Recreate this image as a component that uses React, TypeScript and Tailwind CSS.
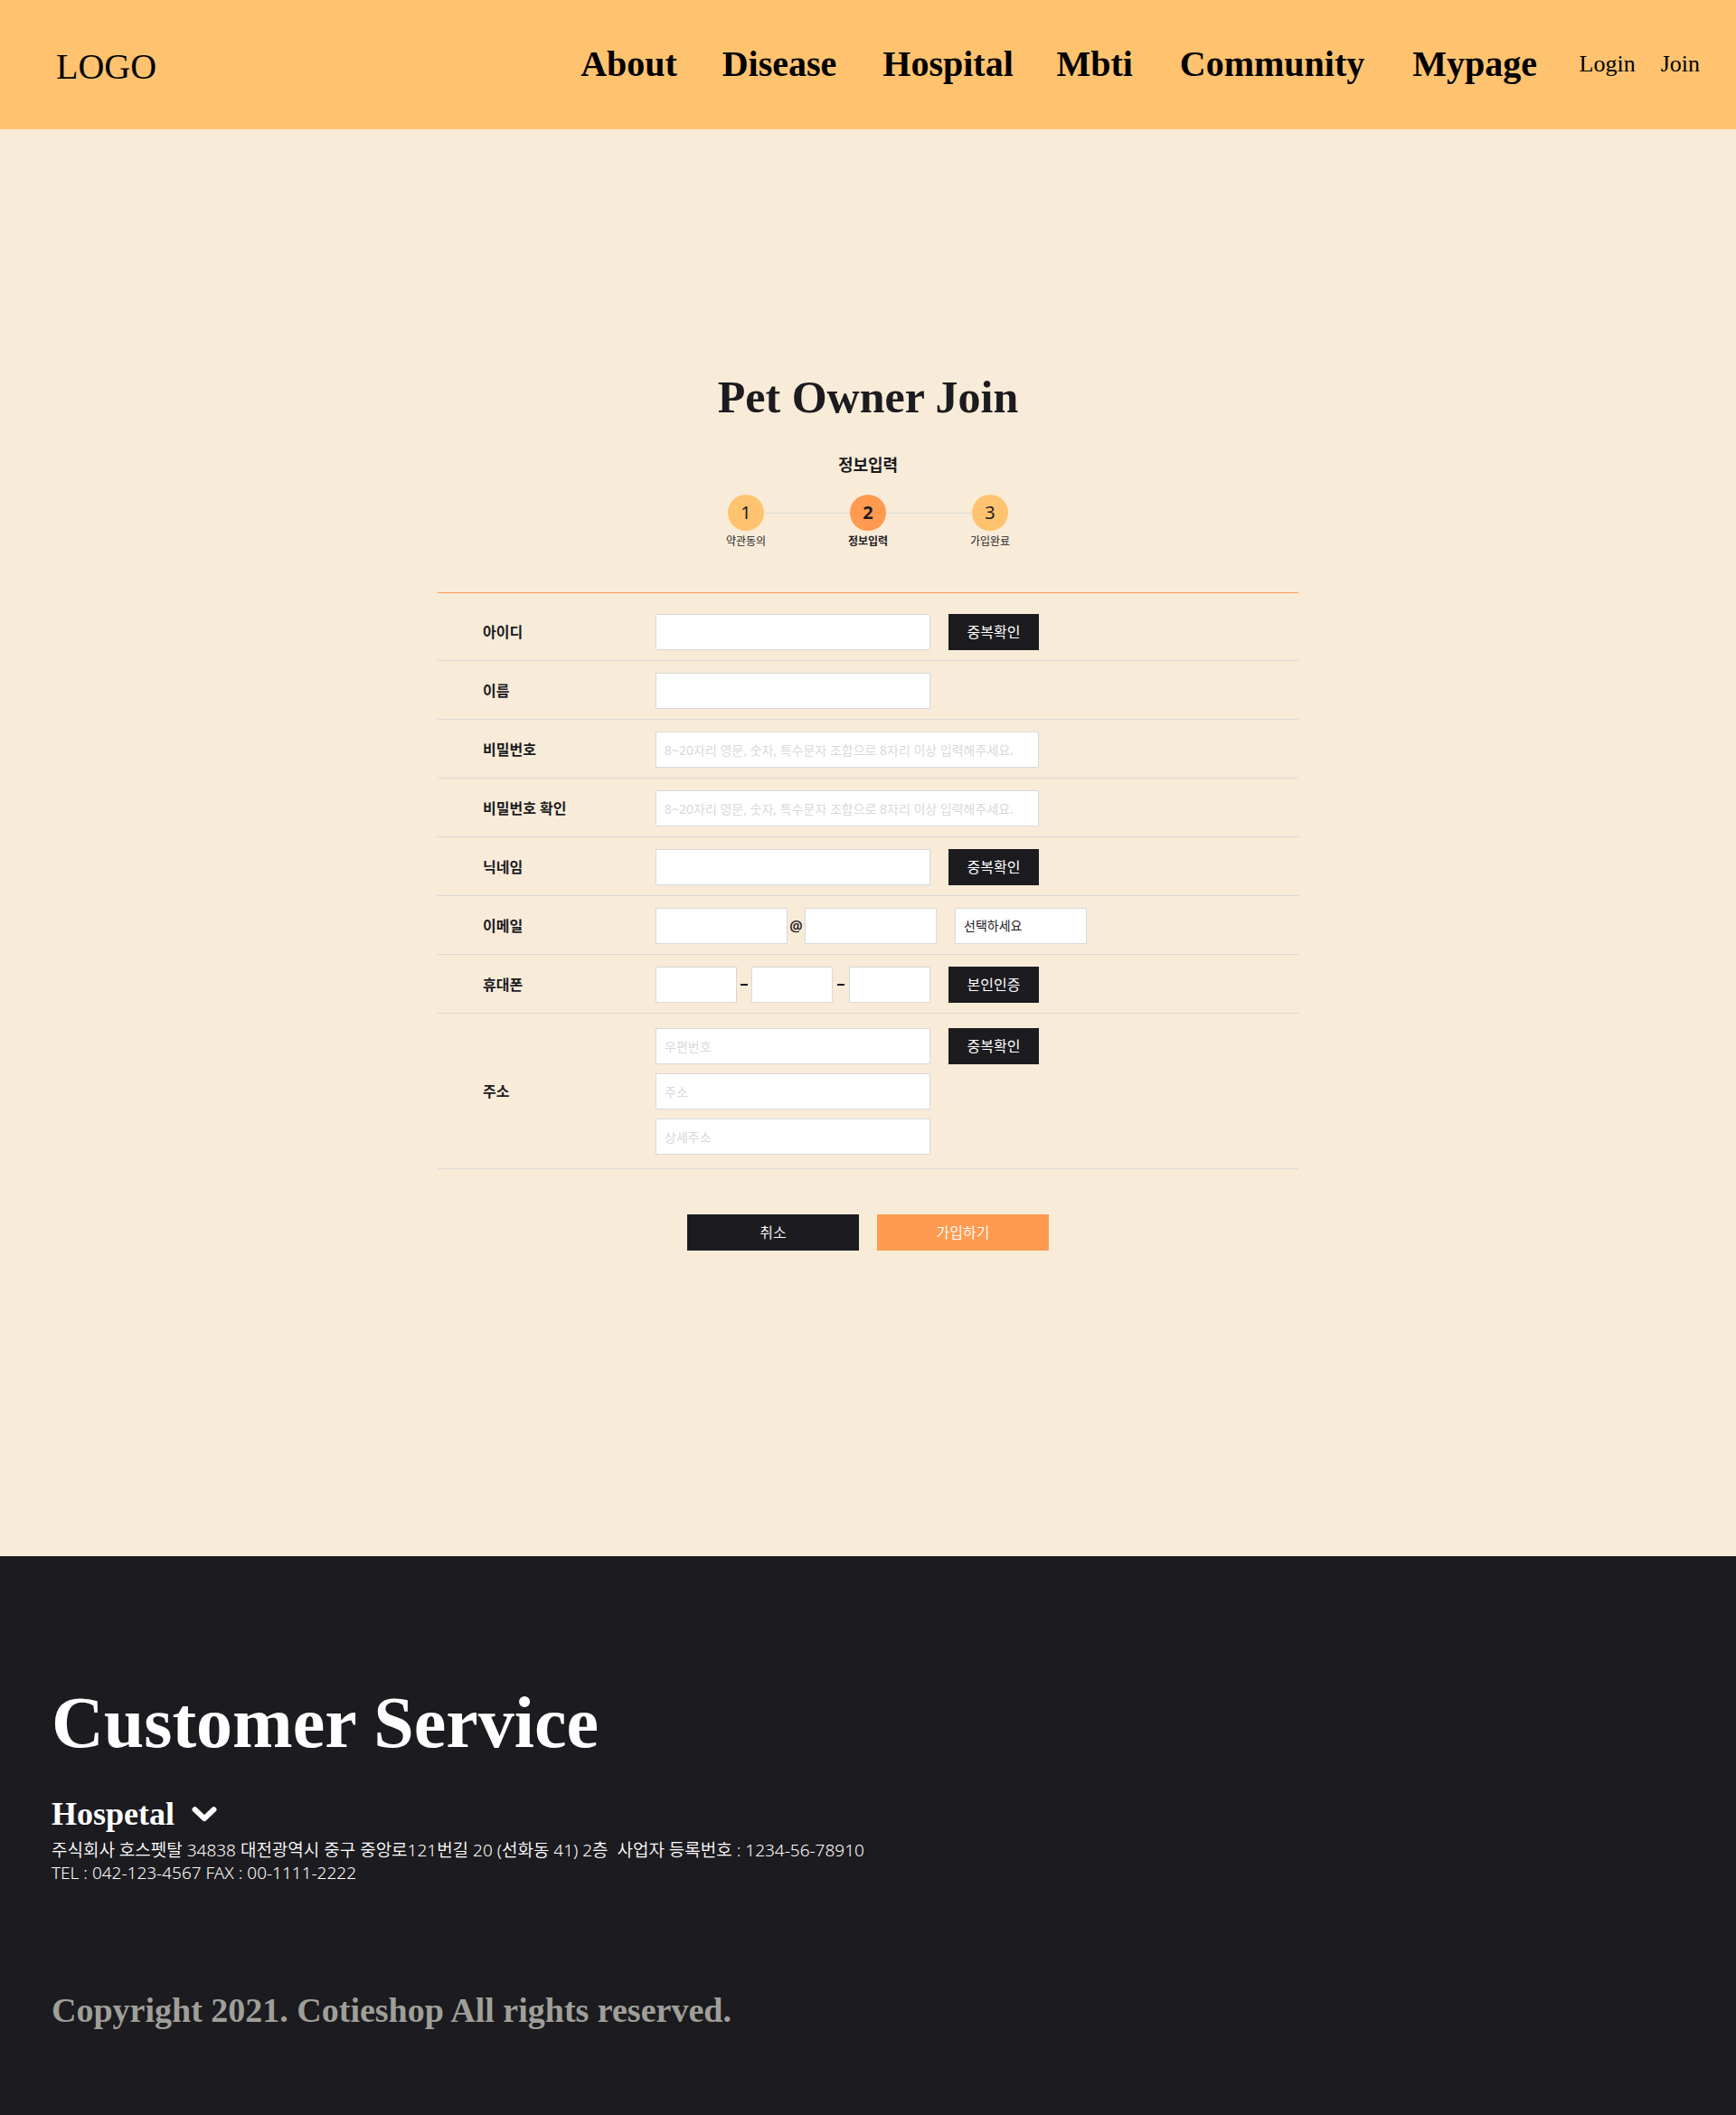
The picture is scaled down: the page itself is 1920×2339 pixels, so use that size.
import type { InputHTMLAttributes, ReactNode } from "react";

const serif = "font-['Liberation_Serif','Noto_Sans_CJK_KR',serif]";

const navLinks = [
  { label: "About", width: "w-[108px]" },
  { label: "Disease", width: "w-[133px]" },
  { label: "Hospital", width: "w-[148px]" },
  { label: "Mbti", width: "w-[84px]" },
  { label: "Community", width: "w-[217px]" },
  { label: "Mypage", width: "w-[139px]" },
];

const steps = [
  { n: 1, label: "약관동의", active: false },
  { n: 2, label: "정보입력", active: true },
  { n: 3, label: "가입완료", active: false },
];

const passwordHint = "8~20자리 영문, 숫자, 특수문자 조합으로 8자리 이상 입력해주세요.";

function Header() {
  return (
    <header className={`${serif} flex h-[143px] items-center justify-between bg-[#ffc36f] pr-10 pl-[62px] text-black`}>
      <a href="#" className="pt-1 text-[40px] leading-none">LOGO</a>
      <nav className="flex items-center gap-[46px] pb-0.5">
        {navLinks.map((link) => (
          <a key={link.label} href="#" className={`${link.width} text-center text-[40px] leading-none font-bold`}>
            {link.label}
          </a>
        ))}
        <div className="flex gap-7 text-[26px] leading-none">
          <a href="#">Login</a>
          <a href="#">Join</a>
        </div>
      </nav>
    </header>
  );
}

function Steps() {
  return (
    <ol className="relative mx-auto flex w-[326px] justify-between">
      <li aria-hidden="true" className="absolute inset-x-7 top-5 h-px bg-[#d9d9d9]" />
      {steps.map((step) => (
        <li
          key={step.n}
          aria-current={step.active ? "step" : undefined}
          className={`relative flex w-14 flex-col items-center ${step.active ? "font-bold" : ""}`}
        >
          <span
            className={`flex size-10 items-center justify-center rounded-full text-xl ${
              step.active ? "bg-[#ff9b50]" : "bg-[#ffc36f]"
            }`}
          >
            {step.n}
          </span>
          <span className="pt-1 text-xs leading-4 whitespace-nowrap">{step.label}</span>
        </li>
      ))}
    </ol>
  );
}

function Row({ label, id, tall, children }: { label: string; id: string; tall?: boolean; children: ReactNode }) {
  return (
    <div className={`flex items-center border-b border-[#d9d9d9] pl-[50px] ${tall ? "pt-4 pb-[15px]" : "pt-[13px] pb-[11px]"}`}>
      <label htmlFor={id} className="w-[191px] shrink-0 font-bold">{label}</label>
      <div className="flex items-center">{children}</div>
    </div>
  );
}

function Field({ width, ...rest }: { width: string } & InputHTMLAttributes<HTMLInputElement>) {
  return (
    <input
      {...rest}
      className={`${width} h-10 border border-[#d9d9d9] bg-white px-[9px] text-sm placeholder:text-[#d9d9d9]`}
    />
  );
}

function DarkButton({ children }: { children: ReactNode }) {
  return (
    <button type="button" className="ml-5 h-10 w-[100px] bg-[#1c1b1f] text-white">
      {children}
    </button>
  );
}

function JoinForm() {
  return (
    <form className="mx-auto mt-12 max-w-[952px]">
      <div className="border-t border-[#ff9b50] pt-[10px]">
        <Row label="아이디" id="user-id">
          <Field id="user-id" width="w-[304px]" />
          <DarkButton>중복확인</DarkButton>
        </Row>
        <Row label="이름" id="name">
          <Field id="name" width="w-[304px]" />
        </Row>
        <Row label="비밀번호" id="password">
          <Field id="password" type="password" width="w-[424px]" placeholder={passwordHint} />
        </Row>
        <Row label="비밀번호 확인" id="password-check">
          <Field id="password-check" type="password" width="w-[424px]" placeholder={passwordHint} />
        </Row>
        <Row label="닉네임" id="nickname">
          <Field id="nickname" width="w-[304px]" />
          <DarkButton>중복확인</DarkButton>
        </Row>
        <Row label="이메일" id="email">
          <Field id="email" width="w-[146px]" />
          <span className="w-[19px] text-center font-semibold">@</span>
          <Field aria-label="이메일 도메인" width="w-[146px]" />
          <select
            aria-label="도메인 선택"
            className="ml-5 h-10 w-[146px] appearance-none border border-[#d9d9d9] bg-white px-[9px] text-sm"
          >
            <option>선택하세요</option>
          </select>
        </Row>
        <Row label="휴대폰" id="phone">
          <Field id="phone" width="w-[90px]" />
          <span className="flex w-4 justify-center"><span className="h-0.5 w-2 bg-[#1c1b1f]" /></span>
          <Field aria-label="휴대폰 가운데 자리" width="w-[90px]" />
          <span className="flex w-[18px] justify-center"><span className="h-0.5 w-2 bg-[#1c1b1f]" /></span>
          <Field aria-label="휴대폰 끝자리" width="w-[90px]" />
          <DarkButton>본인인증</DarkButton>
        </Row>
        <Row label="주소" id="zip" tall>
          <div className="flex flex-col gap-[10px]">
            <div className="flex">
              <Field id="zip" width="w-[304px]" placeholder="우편번호" />
              <DarkButton>중복확인</DarkButton>
            </div>
            <Field aria-label="주소" width="w-[304px]" placeholder="주소" />
            <Field aria-label="상세주소" width="w-[304px]" placeholder="상세주소" />
          </div>
        </Row>
      </div>
      <div className="mt-[50px] flex justify-center gap-5 font-[350] text-white">
        <button type="button" className="h-10 w-[190px] bg-[#1c1b1f]">취소</button>
        <button type="submit" className="h-10 w-[190px] bg-[#ff9b50]">가입하기</button>
      </div>
    </form>
  );
}

function Footer() {
  return (
    <footer className="bg-[#1c1b1f] px-[57px] pt-[140px] pb-[94px] text-white">
      <h2 className={`${serif} text-[80px] leading-[88px] font-bold`}>Customer Service</h2>
      <button type="button" className={`${serif} mt-[35px] flex items-center gap-[19px] text-4xl leading-[44px] font-bold`}>
        Hospetal
        <svg aria-hidden="true" viewBox="0 0 28 17" className="h-[17px] w-7" fill="none" stroke="currentColor" strokeWidth="6" strokeLinecap="round" strokeLinejoin="round">
          <path d="M3.5 3.2 14 13.2 24.5 3.2" />
        </svg>
      </button>
      <address className="mt-[6px] text-[19px] leading-[25px] font-[350] whitespace-pre-wrap not-italic">
        <p>{"주식회사 호스펫탈 34838 대전광역시 중구 중앙로121번길 20 (선화동 41) 2층  사업자 등록번호 : 1234-56-78910"}</p>
        <p>TEL : 042-123-4567 FAX : 00-1111-2222</p>
      </address>
      <p className={`${serif} mt-[117px] text-[38px] leading-[44px] font-bold text-[#9f9f99]`}>
        Copyright 2021. Cotieshop All rights reserved.
      </p>
    </footer>
  );
}

export default function App() {
  return (
    <div className="bg-[#f8ebd8] font-['Noto_Sans','Noto_Sans_CJK_KR',sans-serif] text-base text-[#1c1b1f]">
      <Header />
      <main className="pt-[266px] pb-[338px]">
        <h1 className={`${serif} text-center text-[50px] leading-[60px] font-bold`}>Pet Owner Join</h1>
        <p className="mt-8 mb-5 text-center text-lg leading-[26px] font-bold">정보입력</p>
        <Steps />
        <JoinForm />
      </main>
      <Footer />
    </div>
  );
}
